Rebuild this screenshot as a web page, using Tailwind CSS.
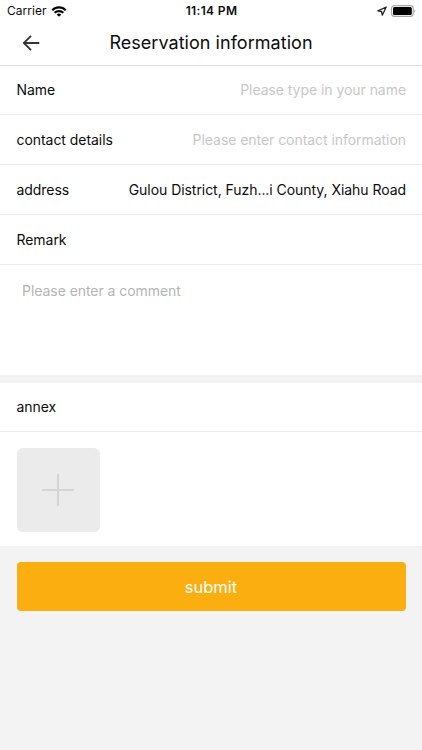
<!DOCTYPE html>
<html lang="en">
<head>
<meta charset="utf-8">
<title>Reservation information</title>
<script src="https://cdn.jsdelivr.net/npm/@tailwindcss/browser@4"></script>
</head>
<body class="flex h-[750px] w-[422px] flex-col overflow-hidden bg-[#f3f3f3] font-[Inter,'Liberation_Sans',sans-serif] text-[14px] leading-5 tracking-[-0.05px] text-[#0c0c0c]">
  <header class="h-[66px] border-b border-[#dedede] bg-white">
    <div class="grid h-[22px] grid-cols-3 items-center pl-[7px] pr-[6px]">
      <div class="flex items-center gap-1 text-[12px] leading-[22px]">
        <span class="tracking-[0.05px]">Carrier</span>
        <svg class="h-[11px] w-[16px]" viewBox="0 0 15 11" fill="none" stroke="#000" stroke-width="2.3">
          <path d="M.8 4.2a9.5 9.5 0 0 1 13.4 0M3.2 6.8a6.1 6.1 0 0 1 8.6 0"/>
          <path d="M7.5 10.8 5.2 8.6a3.3 3.3 0 0 1 4.6 0z" fill="#000" stroke="none"/>
        </svg>
      </div>
      <span class="text-center text-[12px] font-semibold leading-[22px] tracking-[0.35px]">11:14 PM</span>
      <div class="flex items-center justify-end gap-1">
        <svg class="h-[10px] w-[10px]" viewBox="0 0 10 10" fill="none" stroke="#222" stroke-width="1.3" stroke-linejoin="round"><path d="M9.2 1 .9 4.8l3.6.7.8 3.7z"/></svg>
        <svg class="h-3 w-[25px]" viewBox="0 0 25 12" fill="none"><rect x=".6" y=".6" width="21.6" height="10.8" rx="3" stroke="#a5a5a5" stroke-width="1.1"/><rect x="2" y="2" width="18.8" height="8" rx="1.5" fill="#000"/><path d="M23.4 4.2c1.3.7 1.3 2.9 0 3.6z" fill="#a5a5a5"/></svg>
      </div>
    </div>
    <div class="grid h-[42px] grid-cols-[62px_1fr_62px] items-center">
      <svg class="ml-[22px] h-[18px] w-[18px]" viewBox="0 0 18 18" fill="none" stroke="#333" stroke-width="1.8"><path d="M17.3 9H2M9 1.8 1.8 9 9 16.2"/></svg>
      <h1 class="whitespace-nowrap text-center text-[18px] leading-6 tracking-[0.04px]">Reservation information</h1>
    </div>
  </header>
  <main>
    <section class="bg-white">
      <div class="flex h-[49px] items-center justify-between border-b border-[#ededed] pl-[16.5px] pr-4"><span>Name</span><span class="text-[#c7c7c9]">Please type in your name</span></div>
      <div class="flex h-[50px] items-center justify-between border-b border-[#ededed] pl-[16.5px] pr-4"><span>contact details</span><span class="text-[#c7c7c9]">Please enter contact information</span></div>
      <div class="flex h-[50px] items-center justify-between border-b border-[#ededed] pl-[16.5px] pr-4"><span>address</span><span>Gulou District, Fuzh...i County, Xiahu Road</span></div>
      <div class="flex h-[50px] items-center border-b border-[#ededed] px-[16.5px]"><span>Remark</span></div>
      <div class="h-[110px] px-[22px] pt-4 text-[#b5b5b5]">Please enter a comment</div>
    </section>
    <section class="mt-2 bg-white">
      <div class="flex h-[49px] items-center border-b border-[#ededed] px-[16.5px]"><span>annex</span></div>
      <div class="h-[114px] px-[16.5px] pt-4">
        <button class="flex h-[84px] w-[83px] items-center justify-center rounded-[6px] bg-[#ebebeb]" aria-label="Add attachment">
          <svg class="h-8 w-8" viewBox="0 0 32 32" stroke="#d5d5d6" stroke-width="2"><path d="M16 0v32M0 16h32"/></svg>
        </button>
      </div>
    </section>
    <div class="px-[16.5px] pt-4">
      <button class="h-[49px] w-full rounded-[4px] bg-[#fbae0f] text-[16.5px] tracking-normal text-white">submit</button>
    </div>
  </main>
</body>
</html>
